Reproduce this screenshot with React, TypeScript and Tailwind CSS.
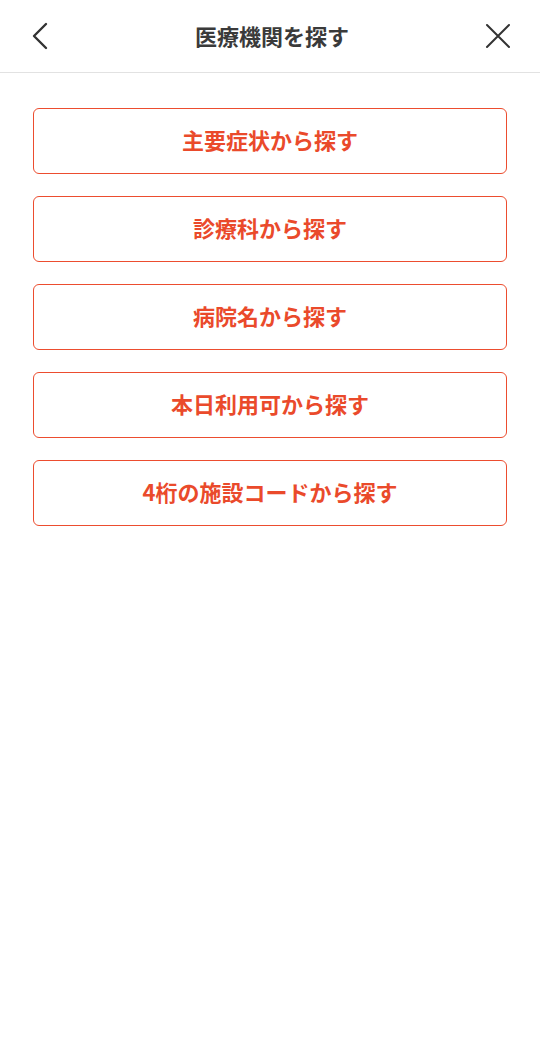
const items = [
  "主要症状から探す",
  "診療科から探す",
  "病院名から探す",
  "本日利用可から探す",
  "4桁の施設コードから探す",
];

export default function App() {
  return (
    <div
      className="min-h-[1040px] w-full bg-white"
      style={{ fontFamily: '"Noto Sans CJK JP", "Noto Sans", sans-serif' }}
    >
      <header className="flex h-[73px] items-center justify-between border-b border-[#e2e2e2] pl-[30px] pr-[26px]">
        <button className="flex h-8 w-8 items-center justify-start text-[#333]">
          <svg width="20" height="28" viewBox="0 0 20 28" fill="none">
            <path d="M16 2 L4 14 L16 26" stroke="currentColor" strokeWidth="2.4" strokeLinecap="round" strokeLinejoin="round" />
          </svg>
        </button>
        <h1 className="pb-[3px] text-[22px] font-bold leading-none text-[#3a3a3a]">医療機関を探す</h1>
        <button className="flex h-8 w-8 items-center justify-center text-[#333]">
          <svg width="26" height="26" viewBox="0 0 26 26" fill="none">
            <path d="M2 2 L24 24 M24 2 L2 24" stroke="currentColor" strokeWidth="2" strokeLinecap="round" />
          </svg>
        </button>
      </header>
      <main className="flex flex-col gap-[22px] px-[33px] pt-[35px]">
        {items.map((label) => (
          <button
            key={label}
            className="flex h-[66px] items-center justify-center rounded-[6px] border-[1.75px] border-[#ec4d2f] pb-[4px] text-[22px] font-bold leading-none text-[#ea4a2b]"
          >
            {label}
          </button>
        ))}
      </main>
    </div>
  );
}
